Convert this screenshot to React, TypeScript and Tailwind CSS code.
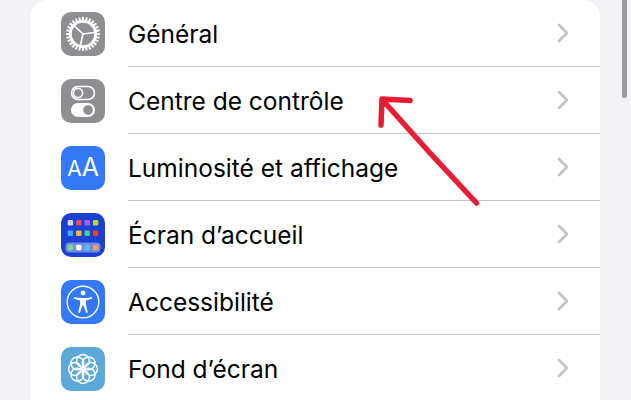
import React from 'react';

const GearIcon = () => (
  <svg viewBox="0 0 44 44" className="w-11 h-11">
    <rect width="44" height="44" rx="10" fill="#8e8e93" />
    {Array.from({ length: 28 }).map((_, i) => (
      <line key={i} x1="22" y1="5" x2="22" y2="10" stroke="#fff" strokeWidth="2" transform={`rotate(${i * (360 / 28)} 22 22)`} />
    ))}
    <circle cx="22" cy="22" r="12.6" fill="none" stroke="#fff" strokeWidth="2.8" />
    <path d="M22 22 L14.6 15 M22 22 L33 20.5 M22 22 L19.5 33" stroke="#fff" strokeWidth="1.7" strokeLinecap="round" />
  </svg>
);

const ToggleIcon = () => (
  <svg viewBox="0 0 44 44" className="w-11 h-11">
    <rect width="44" height="44" rx="10" fill="#8e8e93" />
    <rect x="10.5" y="7.5" width="23" height="13" rx="6.5" fill="none" stroke="#fff" strokeWidth="1.6" />
    <circle cx="17" cy="14" r="4.6" fill="none" stroke="#fff" strokeWidth="1.6" />
    <rect x="10" y="24" width="24" height="14" rx="7" fill="#fff" />
    <circle cx="27" cy="31" r="4.8" fill="#8e8e93" />
  </svg>
);

const TextSizeIcon = () => (
  <div className="w-11 h-11 rounded-[10px] bg-[#3478f6] flex items-baseline justify-center text-white font-normal pt-[9px] leading-none">
    <span className="text-[21px]">A</span>
    <span className="text-[25px]">A</span>
  </div>
);

const homeTop = ['#d6d6d6', '#e8505f', '#a35ff0', '#b5d33d', '#3fb0f5', '#f6b92f', '#4cc9a0', '#e8403f'];
const homeDock = ['#7fdc7a', '#ffffff', '#56bdf8', '#f6a04d'];

const HomeIcon = () => (
  <svg viewBox="0 0 44 44" className="w-11 h-11">
    <rect width="44" height="44" rx="10" fill="#1c40d0" />
    {homeTop.map((c, i) => (
      <rect key={i} x={6.7 + (i % 4) * 8.4} y={i < 4 ? 7 : 17.5} width="5.4" height="5.4" rx="1.2" fill={c} />
    ))}
    <rect x="4.5" y="29.5" width="35" height="10" rx="4" fill="#6f8ae6" />
    {homeDock.map((c, i) => (
      <rect key={i} x={6.7 + i * 8.4} y="31.8" width="5.4" height="5.4" rx="1.2" fill={c} />
    ))}
  </svg>
);

const AccessIcon = () => (
  <svg viewBox="0 0 44 44" className="w-11 h-11">
    <rect width="44" height="44" rx="10" fill="#3478f6" />
    <circle cx="22" cy="22" r="15.8" fill="none" stroke="#fff" strokeWidth="1.4" />
    <circle cx="22" cy="13" r="2.4" fill="#fff" />
    <path d="M13 17 C17 18.3 27 18.3 31 17 L31.4 18.5 L25 20.4 L25 25 L26.8 32.6 L25.2 33.1 L22.5 25.6 L21.5 25.6 L18.8 33.1 L17.2 32.6 L19 25 L19 20.4 L12.6 18.5 Z" fill="#fff" />
  </svg>
);

const FlowerIcon = () => (
  <svg viewBox="0 0 44 44" className="w-11 h-11">
    <rect width="44" height="44" rx="10" fill="#5aa9d8" />
    {Array.from({ length: 8 }).map((_, i) => (
      <circle key={i} cx="22" cy="14" r="6.4" fill="none" stroke="#fff" strokeWidth="1.5" transform={`rotate(${i * 45} 22 22)`} />
    ))}
    <circle cx="22" cy="22" r="2.6" fill="#fff" />
  </svg>
);

const rows = [
  { label: 'Général', icon: <GearIcon /> },
  { label: 'Centre de contrôle', icon: <ToggleIcon /> },
  { label: 'Luminosité et affichage', icon: <TextSizeIcon /> },
  { label: 'Écran d’accueil', icon: <HomeIcon /> },
  { label: 'Accessibilité', icon: <AccessIcon /> },
  { label: 'Fond d’écran', icon: <FlowerIcon /> },
];

const Chevron = () => (
  <svg viewBox="0 0 12 20" className="w-3 h-5 text-[#c4c4c7]">
    <path d="M2 2 L10 10 L2 18" fill="none" stroke="currentColor" strokeWidth="2.8" strokeLinecap="round" strokeLinejoin="round" />
  </svg>
);

export default function App() {
  return (
    <div className="relative w-[631px] h-[400px] overflow-hidden bg-[#f2f2f7] font-['Inter',sans-serif]">
      {/* Settings list */}
      <div className="ml-[30px] w-[570px] h-[420px] bg-white rounded-t-[17px]">
        {rows.map((row) => (
          <div key={row.label} className="flex items-center h-[67px] pl-[31px]">
            <div className="shrink-0 w-11 h-11">{row.icon}</div>
            <div className="ml-[23px] flex-1 h-full flex items-center justify-between pr-[31px] border-b border-[#c8c8cc]">
              <span className="text-[24.5px] text-black pt-[2px]">{row.label}</span>
              <Chevron />
            </div>
          </div>
        ))}
      </div>

      {/* Scroll indicator */}
      <div className="absolute left-[622px] -top-2 w-[5px] h-[106px] rounded-full bg-[#9b9b9f]" />

      {/* Red hand drawn arrow */}
      <svg className="absolute inset-0 w-[631px] h-[400px] pointer-events-none" viewBox="0 0 631 400">
        <path
          d="M476.5 203 L430 153 L382.5 100 M410 100.5 L382 99 L381 125"
          fill="none"
          stroke="#e81c34"
          strokeWidth="5.5"
          strokeLinecap="round"
          strokeLinejoin="round"
        />
      </svg>
    </div>
  );
}
